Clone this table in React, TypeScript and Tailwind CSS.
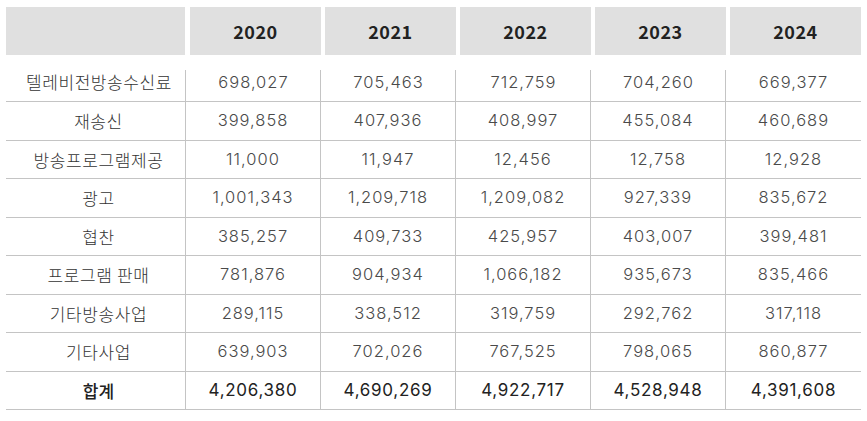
import React from "react";

const years = ["2020", "2021", "2022", "2023", "2024"];

const rows: { label: string; values: string[] }[] = [
  { label: "텔레비전방송수신료", values: ["698,027", "705,463", "712,759", "704,260", "669,377"] },
  { label: "재송신", values: ["399,858", "407,936", "408,997", "455,084", "460,689"] },
  { label: "방송프로그램제공", values: ["11,000", "11,947", "12,456", "12,758", "12,928"] },
  { label: "광고", values: ["1,001,343", "1,209,718", "1,209,082", "927,339", "835,672"] },
  { label: "협찬", values: ["385,257", "409,733", "425,957", "403,007", "399,481"] },
  { label: "프로그램 판매", values: ["781,876", "904,934", "1,066,182", "935,673", "835,466"] },
  { label: "기타방송사업", values: ["289,115", "338,512", "319,759", "292,762", "317,118"] },
  { label: "기타사업", values: ["639,903", "702,026", "767,525", "798,065", "860,877"] },
];

const total = ["4,206,380", "4,690,269", "4,922,717", "4,528,948", "4,391,608"];

const cols = "grid grid-cols-[180px_repeat(5,1fr)]";
const line = "border-[#c4c4c4]";
const firstRowLine =
  "after:absolute after:right-0 after:top-[7px] after:bottom-0 after:w-px after:bg-[#c4c4c4]";

export default function App() {
  return (
    <div className="w-[867px] h-[421px] bg-white pt-[7px] px-[6px] font-['Noto_Sans_CJK_KR','Noto_Sans',sans-serif]">
      <div className={`${cols} h-[48px]`}>
        <div className="bg-[#e0e0e0] mr-px" />
        {years.map((y) => (
          <div key={y} className="pl-[4px] h-full">
            <div className="flex h-full items-center justify-center bg-[#e0e0e0] text-[18px] font-bold tracking-[0.5px] text-[#222]">
              {y}
            </div>
          </div>
        ))}
      </div>
      <div className="mt-[8px]">
        {rows.map((row, i) => (
          <div key={row.label} className={`${cols} ${i === 0 ? "h-[39px]" : "h-[38.5px]"} border-b ${line}`}>
            <div
              className={`relative flex items-center justify-center pl-[6px] text-[17px] font-light tracking-[0.6px] text-[#333] ${
                i === 0 ? firstRowLine : `border-r ${line}`
              }`}
            >
              {row.label}
            </div>
            {row.values.map((v, j) => (
              <div
                key={j}
                className={`relative flex items-center justify-center font-['Inter',sans-serif] text-[16.5px] font-light tracking-[1px] proportional-nums text-[#4a4a4a] ${
                  j < 4 ? (i === 0 ? firstRowLine : `border-r ${line}`) : ""
                }`}
              >
                {v}
              </div>
            ))}
          </div>
        ))}
        <div className={`${cols} h-[38.5px] border-b ${line}`}>
          <div className={`flex items-center justify-center pl-[6px] border-r ${line} text-[17px] font-medium text-[#222]`}>
            합계
          </div>
          {total.map((v, j) => (
            <div
              key={j}
              className={`flex items-center justify-center font-['Inter',sans-serif] text-[17px] font-normal tracking-[0.7px] proportional-nums text-[#222] ${
                j < 4 ? `border-r ${line}` : ""
              }`}
            >
              {v}
            </div>
          ))}
        </div>
      </div>
    </div>
  );
}
